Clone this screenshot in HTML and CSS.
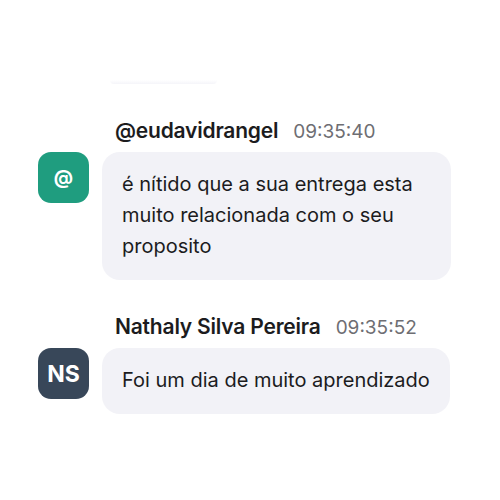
FILE: index.html
```html
<!doctype html>
<html lang="pt-BR">
    <head>
        <meta charset="UTF-8" />
        <title>Chat</title>
        <link rel="stylesheet" href="styles.css">
    </head>
    <body>
        <div class="chat">
            <div class="prev-bubble"></div>

            <div class="message">
                <div class="header">
                    <span class="name">@eudavidrangel</span>
                    <span class="time">09:35:40</span>
                </div>
                <div class="avatar avatar-teal">@</div>
                <div class="bubble">
                    é nítido que a sua entrega esta muito relacionada com o seu proposito
                </div>
            </div>

            <div class="message">
                <div class="header">
                    <span class="name">Nathaly Silva Pereira</span>
                    <span class="time">09:35:52</span>
                </div>
                <div class="avatar avatar-slate">NS</div>
                <div class="bubble">Foi um dia de muito aprendizado</div>
            </div>
        </div>
    </body>
</html>
```

FILE: styles.css
```css
:root {
    --bg-color: #ffffff;
    --text-color: #1c1c1e;
    --dim-color: #6e6e73;
    --bubble-bg: #f2f2f7;
    --teal: #1f9d7f;
    --slate: #384759;
}

body {
    background-color: var(--bg-color);
    color: var(--text-color);
    font-family: Inter, "Noto Sans", sans-serif;
    margin: 0;
}

.chat {
    display: flex;
    flex-direction: column;
    gap: 35px;
    padding: 80px 38px 0;
}

/* bottom edge of the previous message, mostly scrolled away */
.prev-bubble {
    margin-left: 72px;
    width: 107px;
    height: 4px;
    border-radius: 0 0 4px 4px;
    background: linear-gradient(to bottom, #ffffff, #f5f5f9);
}

.message {
    display: grid;
    grid-template-columns: 51px auto;
    column-gap: 13px;
    row-gap: 8px;
    justify-content: start;
}

.header {
    grid-column: 2;
    display: flex;
    align-items: baseline;
    gap: 15px;
    padding-left: 13px;
    line-height: 24px;
}

.name {
    font-size: 21px;
    font-weight: 600;
    letter-spacing: -0.2px;
}

.time {
    font-size: 19px;
    color: var(--dim-color);
}

.avatar {
    grid-column: 1;
    width: 51px;
    height: 51px;
    border-radius: 13px;
    display: flex;
    align-items: center;
    justify-content: center;
    color: #ffffff;
    font-weight: 700;
}

.avatar-teal {
    background-color: var(--teal);
    font-size: 19px;
}

.avatar-slate {
    background-color: var(--slate);
    font-size: 23px;
}

.bubble {
    grid-column: 2;
    width: fit-content;
    max-width: 309px;
    padding: 17px 20px 18px;
    border-radius: 18px;
    background-color: var(--bubble-bg);
    font-size: 20px;
    line-height: 31px;
}
```
